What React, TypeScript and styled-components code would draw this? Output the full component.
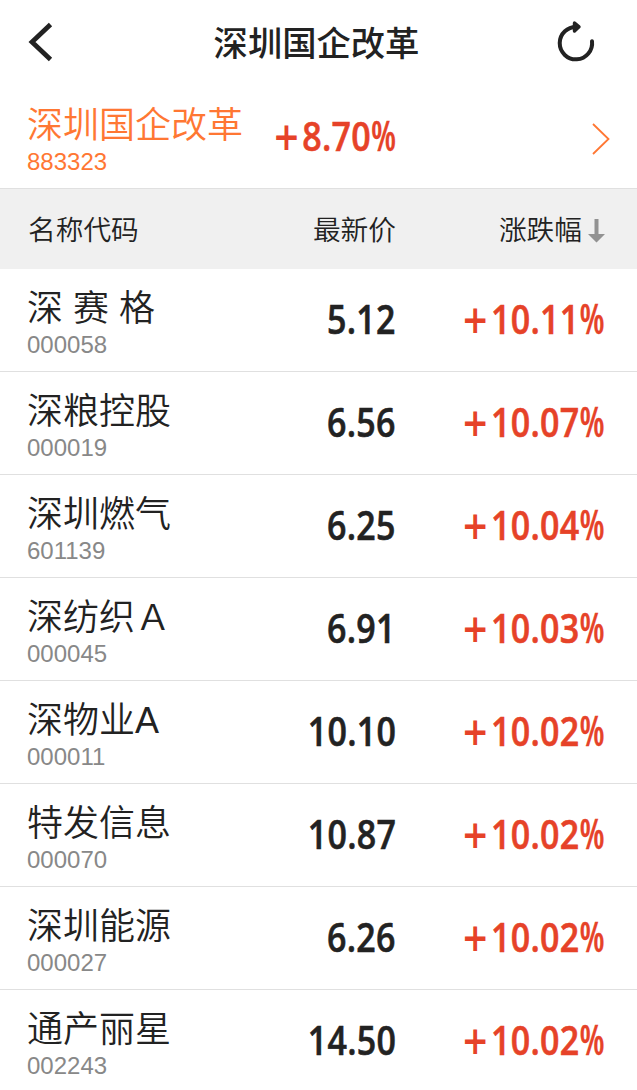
import React from "react";
import styled, { createGlobalStyle } from "styled-components";

const GlobalStyle = createGlobalStyle`
  * { box-sizing: border-box; }
  body { margin: 0; background: #fff; }
`;

const sans = `"Liberation Sans", "Noto Sans CJK SC", sans-serif`;

const Screen = styled.main`
  width: 637px;
  height: 1090px;
  overflow: hidden;
  background: #fff;
  color: #222;
  font-family: ${sans};
`;

const NavBar = styled.header`
  display: grid;
  grid-template-columns: 78px 1fr 82px;
  align-items: center;
  height: 84px;
`;

const Title = styled.h1`
  margin: 0 0 3px;
  text-align: center;
  font: 500 34.3px/50px "Noto Sans CJK SC", sans-serif;
`;

const IconButton = styled.button`
  display: flex;
  width: 80px;
  height: 84px;
  padding: 0;
  border: 0;
  background: none;
  color: #222;
`;

const Grid = styled.div`
  display: grid;
  grid-template-columns: 240px 156px 1fr;
  padding-right: 33px;
`;

const IndexRow = styled(Grid)`
  height: 105px;
  padding-right: 27px;
  border-bottom: 1px solid #e0e0e0;
`;

const HeadRow = styled(Grid)`
  height: 80px;
  align-items: center;
  background: #f0f0f0;
  font-size: 27.7px;
  font-weight: 350;
  line-height: 40px;
`;

const HeadCell = styled.div<{ $end?: boolean }>`
  display: flex;
  align-items: center;
  justify-content: ${(p) => (p.$end ? "flex-end" : "flex-start")};
  padding: 3px 0 0 ${(p) => (p.$end ? 0 : 28)}px;
`;

const StockRow = styled(Grid)`
  height: 103px;
  border-bottom: 1px solid #e0e0e0;
`;

const NameCell = styled.div<{ $accent?: boolean }>`
  padding: ${(p) => (p.$accent ? 17 : 15)}px 0 0 27px;
  color: ${(p) => (p.$accent ? "#ff7733" : "#222")};
  white-space: nowrap;
`;

const Name = styled.div`
  font-size: 36px;
  font-weight: 350;
  line-height: 50px;
`;

const Code = styled.div<{ $accent?: boolean }>`
  font-size: 24px;
  line-height: 22px;
  color: ${(p) => (p.$accent ? "inherit" : "#888")};
`;

const Figure = styled.div<{ $up?: boolean; $top?: number }>`
  justify-self: end;
  padding-top: ${(p) => p.$top ?? 22}px;
  font: 600 40.5px/56px "Open Sans", sans-serif;
  letter-spacing: 0.3px;
  -webkit-text-stroke: 0.6px currentColor;
  white-space: nowrap;
  color: ${(p) => (p.$up ? "#e64228" : "#222")};
  transform: scaleX(0.84);
  transform-origin: right;
`;

const Sign = styled.span`
  position: relative;
  top: 5px;
  margin: 0 4px 0 -1px;
  font-size: 51px;
  line-height: 0;
  -webkit-text-stroke: 0;
`;

const Percent = styled.span`
  font-stretch: 75%;
  font-size: 42px;
  line-height: 0;
  letter-spacing: -0.5px;
  -webkit-text-stroke: 0.3px currentColor;
`;

const IndexLink = styled.div`
  display: flex;
  justify-content: flex-end;
  padding-top: 38px;
`;

const SortArrow = styled.svg`
  margin: 0 -1px 0 6px;
`;

const stocks = [
  ["深 赛 格", "000058", "5.12", "10.11"],
  ["深粮控股", "000019", "6.56", "10.07"],
  ["深圳燃气", "601139", "6.25", "10.04"],
  ["深纺织Ａ", "000045", "6.91", "10.03"],
  ["深物业A", "000011", "10.10", "10.02"],
  ["特发信息", "000070", "10.87", "10.02"],
  ["深圳能源", "000027", "6.26", "10.02"],
  ["通产丽星", "002243", "14.50", "10.02"],
];

function Change({ value, top }: { value: string; top?: number }) {
  return (
    <Figure $up $top={top}>
      <Sign>+</Sign>
      {value}
      <Percent>%</Percent>
    </Figure>
  );
}

export default function App() {
  return (
    <Screen>
      <GlobalStyle />
      <NavBar>
        <IconButton aria-label="返回">
          <svg width="80" height="84" fill="none" stroke="currentColor" strokeWidth="4.8">
            <path d="M50.5 24.5L32 42L50.5 59.5" />
          </svg>
        </IconButton>
        <Title>深圳国企改革</Title>
        <IconButton aria-label="刷新">
          <svg width="80" height="84" fill="none" stroke="currentColor" strokeWidth="4" strokeLinecap="round">
            <path d="M37 41.2A16.2 16.2 0 1 1 22 27" />
            <path d="M19.5 23L24 26.8L19.5 31Z" fill="currentColor" strokeWidth="3.4" strokeLinejoin="round" />
          </svg>
        </IconButton>
      </NavBar>
      <IndexRow>
        <NameCell $accent>
          <Name>深圳国企改革</Name>
          <Code $accent>883323</Code>
        </NameCell>
        <Change value="8.70" top={24} />
        <IndexLink>
          <svg width="18" height="34" fill="none" stroke="#ff7733" strokeWidth="1.8">
            <path d="M1 2L16.5 17L1 32" />
          </svg>
        </IndexLink>
      </IndexRow>
      <HeadRow>
        <HeadCell>名称代码</HeadCell>
        <HeadCell $end>最新价</HeadCell>
        <HeadCell $end>
          涨跌幅
          <SortArrow width="17" height="24" fill="#929292">
            <path d="M6.5 0H10.5V15H17L8.5 23.5L0 15H6.5Z" />
          </SortArrow>
        </HeadCell>
      </HeadRow>
      {stocks.map(([name, code, price, change]) => (
        <StockRow key={code}>
          <NameCell>
            <Name>{name}</Name>
            <Code>{code}</Code>
          </NameCell>
          <Figure>{price}</Figure>
          <Change value={change} />
        </StockRow>
      ))}
    </Screen>
  );
}
